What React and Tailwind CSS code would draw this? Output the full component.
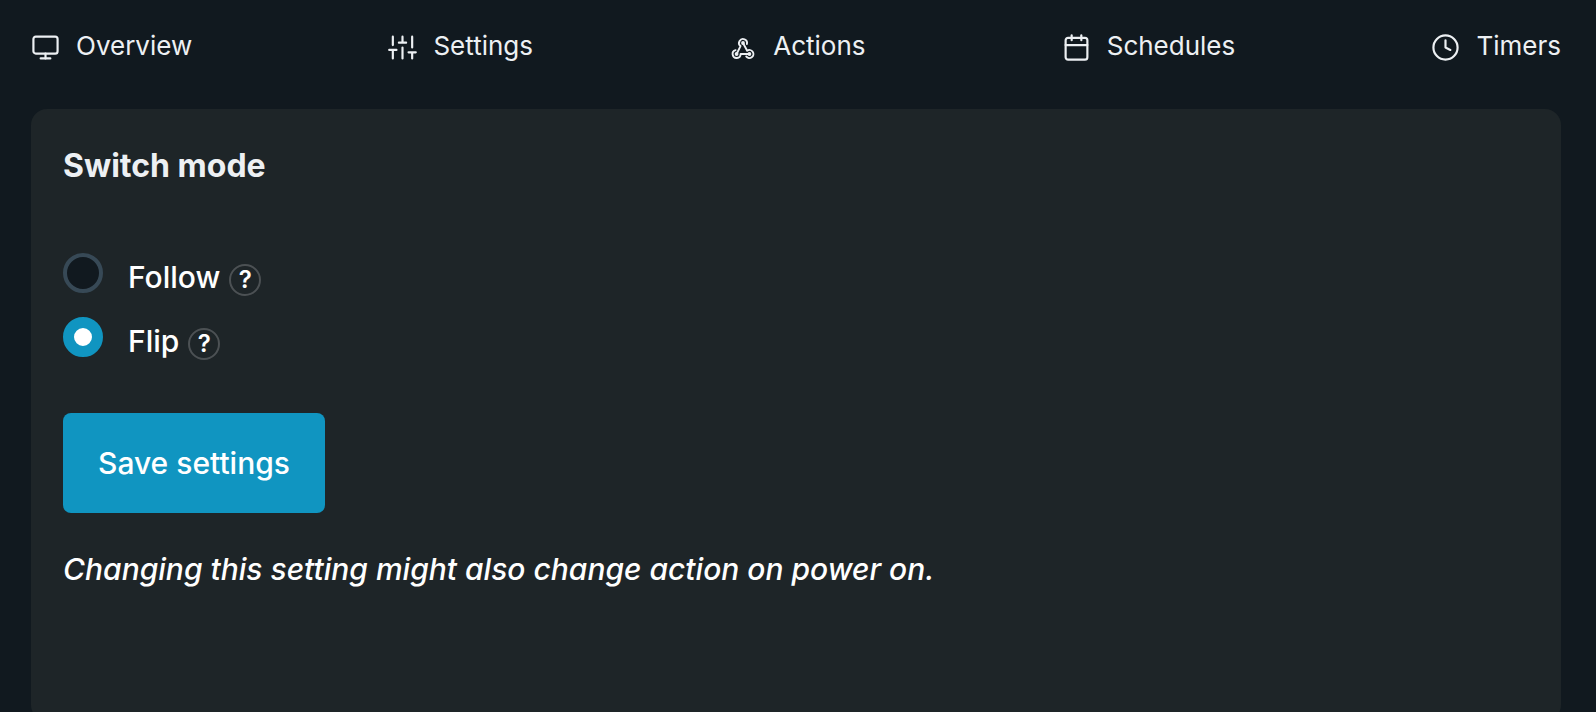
import React, { useState } from "react";
import { Monitor, Clock, Calendar } from "lucide-react";

const SlidersIcon = () => (
    <svg viewBox="0 0 24 24" className="w-[29px] h-[29px]" fill="none" stroke="currentColor" strokeWidth="1.8" strokeLinecap="round">
        <path d="M4 21v-7M4 10V3M12 21v-9M12 8V3M20 21v-5M20 12V3M1 14h6M9 8h6M17 16h6" />
    </svg>
);

const WebhookIcon = () => (
    <svg viewBox="0 0 28 28" className="size-7" fill="none" stroke="currentColor" strokeWidth="1.9" strokeLinecap="round" strokeLinejoin="round">
        <path d="M17.9 10A4 4 0 1 0 11.5 12.1L7.6 20" />
        <path d="M14 9L18.2 16.7A4 4 0 1 1 17.2 22.4" />
        <path d="M6.6 16.1A4 4 0 1 0 11.6 20H20.4" />
        <g fill="currentColor" stroke="none">
            <circle cx="14" cy="9" r="1.9" />
            <circle cx="7.6" cy="20" r="1.9" />
            <circle cx="20.4" cy="20" r="1.9" />
        </g>
    </svg>
);

const navItems = [
    { label: "Overview", icon: <Monitor size={29} strokeWidth={1.8} /> },
    { label: "Settings", icon: <SlidersIcon /> },
    { label: "Actions", icon: <WebhookIcon /> },
    { label: "Schedules", icon: <Calendar size={29} strokeWidth={1.8} /> },
    { label: "Timers", icon: <Clock size={29} strokeWidth={1.8} /> },
];

const modes = [
    { id: "follow", label: "Follow" },
    { id: "flip", label: "Flip" },
];

const App = () => {
    const [mode, setMode] = useState("flip");

    return (
        <div className="h-screen overflow-y-auto [scrollbar-width:none] bg-[#11191f] pl-[31px] pr-[35px] font-['Inter',sans-serif] text-white">
            {/* Top navigation */}
            <nav className="flex items-center justify-between pt-7 pb-[45px] text-[#edf0f3]">
                {navItems.map(item => (
                    <a key={item.label} href="#" className="flex items-center gap-4 text-[26px] leading-9">
                        <span className="pt-[3px]">{item.icon}</span>
                        {item.label}
                    </a>
                ))}
            </nav>

            {/* Settings card */}
            <main className="rounded-2xl bg-[#1e2528] px-8 pt-[33px] pb-32">
                <h1 className="text-[32px] leading-12 font-bold text-[#edf0f3]">Switch mode</h1>

                <div className="mt-[59px] flex flex-col gap-4">
                    {modes.map(m => (
                        <div key={m.id} className="flex items-start">
                            <input
                                id={m.id}
                                type="radio"
                                name="mode"
                                checked={mode === m.id}
                                onChange={() => setMode(m.id)}
                                className="appearance-none size-10 mt-1 rounded-full border-4 border-[#374956] bg-[#11191f] checked:border-[11px] checked:border-[#1095c1] checked:bg-white"
                            />
                            <label htmlFor={m.id} className="ml-[25px] mt-2 text-[30px] leading-10 font-medium">{m.label}</label>
                            <button
                                type="button"
                                aria-label={`About ${m.label}`}
                                className="ml-[9px] mt-[15px] size-8 rounded-full border-2 border-[#4c5154] text-[24px] leading-7 font-semibold"
                            >
                                ?
                            </button>
                        </div>
                    ))}
                </div>

                <button type="button" className="mt-[52px] rounded-lg bg-[#1095c1] px-[35px] py-[26px] text-[30px] leading-12 font-medium">
                    Save settings
                </button>
                <p className="mt-8 text-[30px] leading-12 font-medium italic">
                    Changing this setting might also change action on power on.
                </p>
            </main>
        </div>
    );
};

export default App;
